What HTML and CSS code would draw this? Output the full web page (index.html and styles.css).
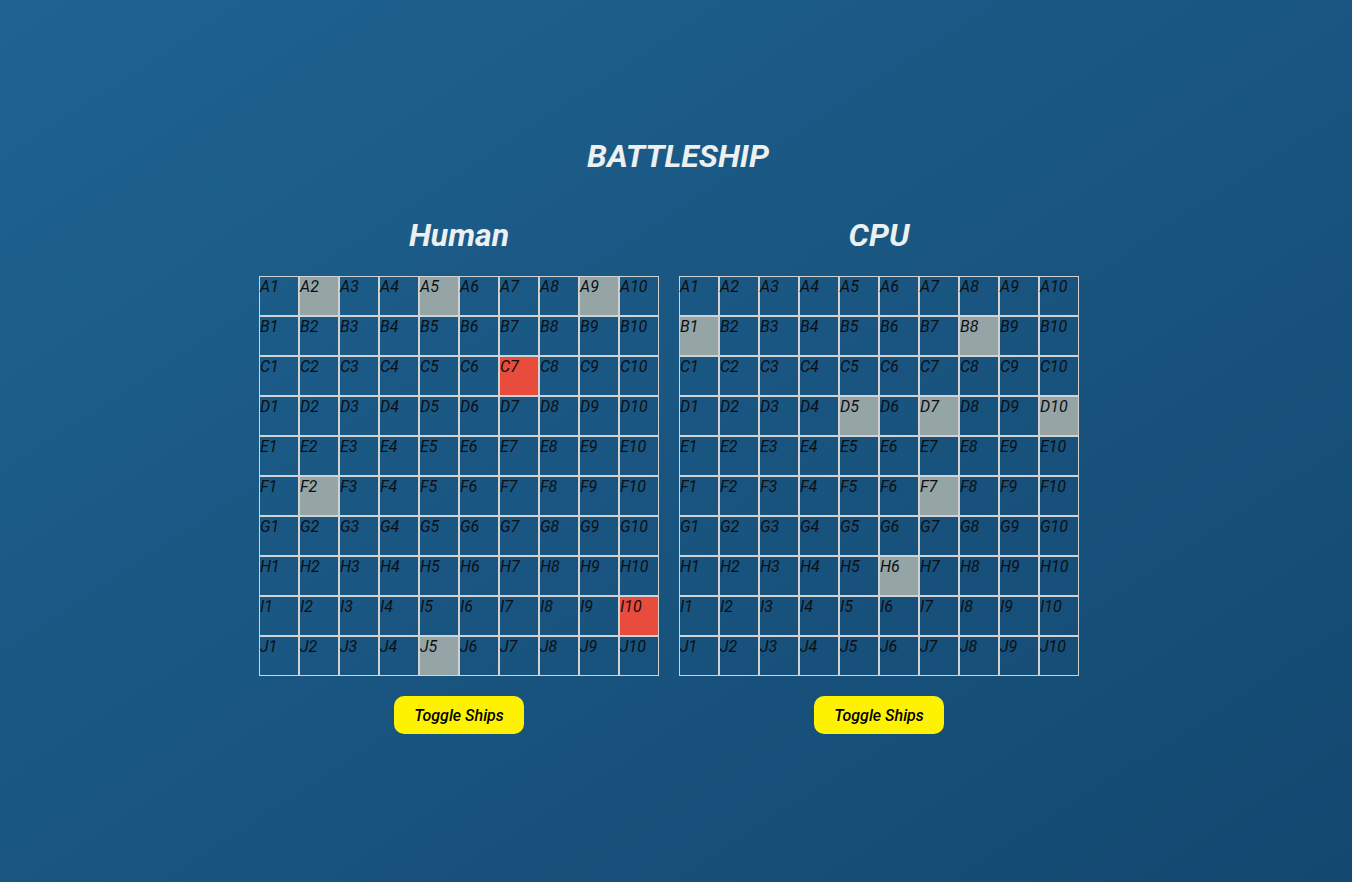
FILE: index.html
```html
<!DOCTYPE html>
<html lang="en">
<head>
    <meta charset="UTF-8">
    <meta name="viewport" content="width=device-width, initial-scale=1.0">
    <title>Battleship</title>
    <link rel="stylesheet" href="styles.css">
</head>
<body>
    <h1 class="title">BATTLESHIP</h1>
    <div class="boards">
        <div class="player">
            <h2>Human</h2>
            <div id="human" class="board"></div>
            <button class="toggle">Toggle Ships</button>
        </div>
        <div class="player">
            <h2>CPU</h2>
            <div id="cpu" class="board"></div>
            <button class="toggle">Toggle Ships</button>
        </div>
    </div>

    <script>
        const rows = 'ABCDEFGHIJ';
        const layout = {
            human: { ship: ['A2', 'A5', 'A9', 'F2', 'J5'], hit: ['C7', 'I10'] },
            cpu: { ship: ['B1', 'B8', 'D5', 'D7', 'D10', 'F7', 'H6'], hit: [] }
        };

        function buildBoard(id) {
            const board = document.getElementById(id);
            for (let r = 0; r < 10; r++) {
                for (let c = 1; c <= 10; c++) {
                    const name = rows[r] + c;
                    const cell = document.createElement('div');
                    cell.className = 'cell';
                    if (layout[id].ship.includes(name)) cell.classList.add('ship');
                    if (layout[id].hit.includes(name)) cell.classList.add('hit');
                    cell.textContent = name;
                    board.appendChild(cell);
                }
            }
        }

        buildBoard('human');
        buildBoard('cpu');
    </script>
</body>
</html>
```

FILE: styles.css
```css
body {
    font-family: Roboto, "Liberation Sans", sans-serif;
    font-style: italic;
    margin: 0;
    min-height: 100vh;
    padding-top: 137px;
    box-sizing: border-box;
    background: linear-gradient(to bottom right, #1f6391, #134870);
    color: #ecf0f1;
}
.title {
    font-size: 32px;
    font-weight: 700;
    text-align: center;
    margin: 0 0 41px;
    padding-left: 4px;
}
.boards {
    display: flex;
    justify-content: center;
    gap: 20px;
    padding-right: 14px;
}
.player {
    display: flex;
    flex-direction: column;
    align-items: center;
}
.player h2 {
    font-size: 32px;
    font-weight: 700;
    margin: 0 0 22px;
}
.board {
    display: grid;
    grid-template-columns: repeat(10, 40px);
    grid-auto-rows: 40px;
}
.cell {
    box-sizing: border-box;
    border: 1px solid #d2d2d2;
    font-size: 16px;
    color: #0c0f14;
    line-height: normal;
}
.ship {
    background-color: #95a5a6;
}
.hit {
    background-color: #e74c3c;
}
.toggle {
    margin-top: 20px;
    width: 130px;
    height: 38px;
    border: none;
    border-radius: 10px;
    background-color: #fff200;
    color: #000;
    font-family: Roboto, "Liberation Sans", sans-serif;
    font-style: italic;
    font-weight: 500;
    font-size: 16px;
}
```
